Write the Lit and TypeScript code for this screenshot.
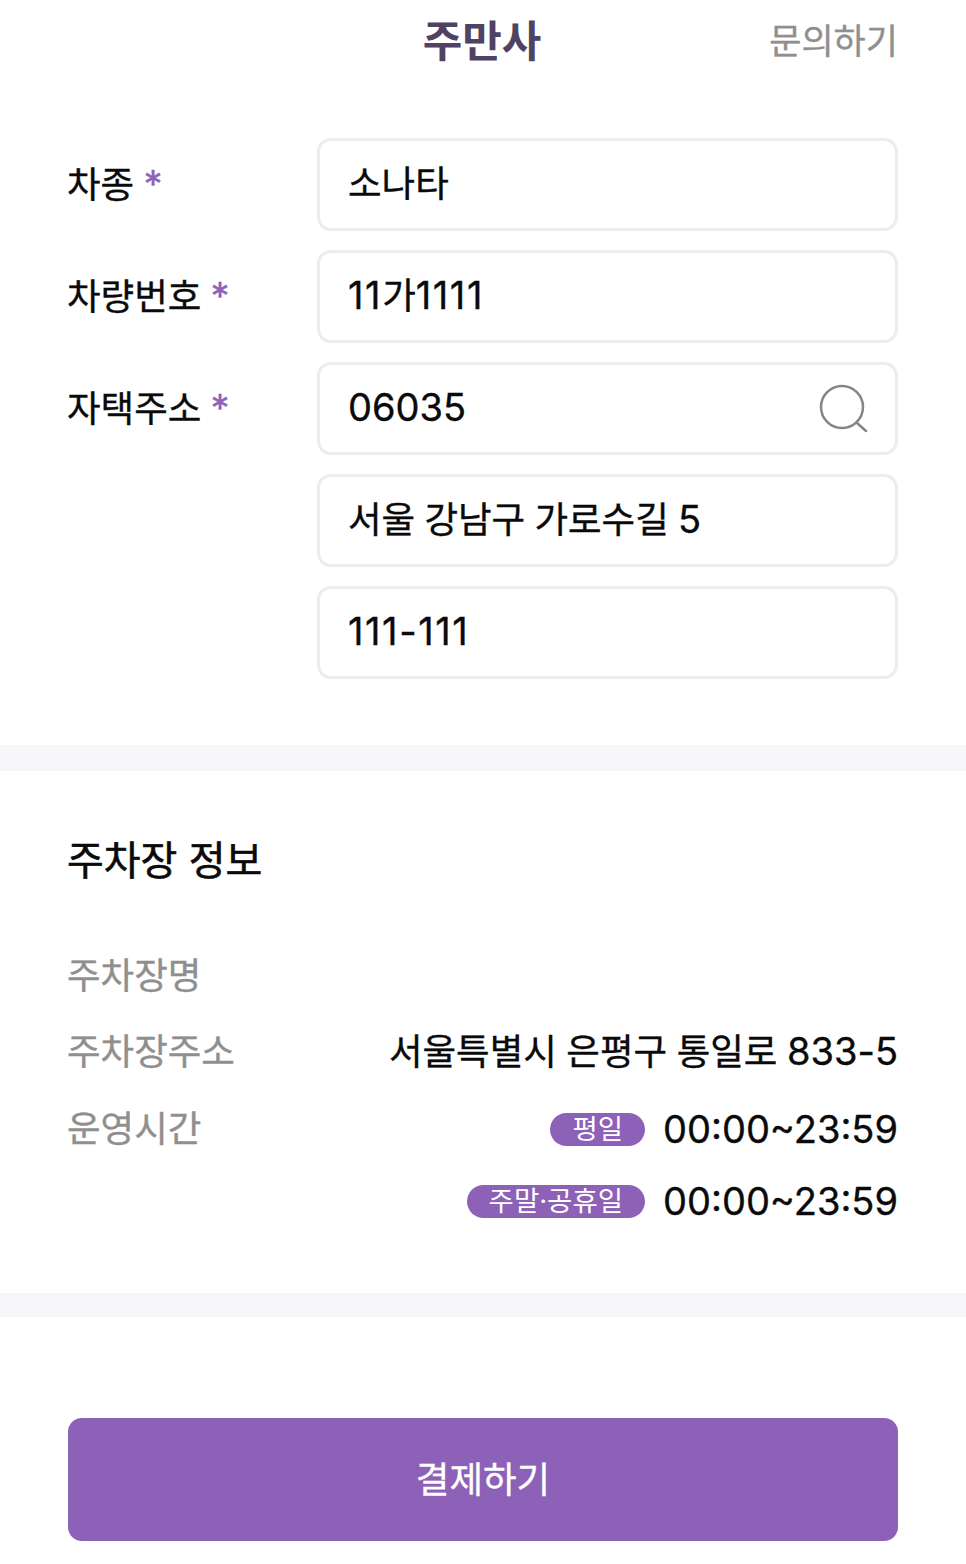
import { LitElement, html, css } from "lit";
import { customElement } from "lit/decorators.js";

@customElement("app-root")
export class AppRoot extends LitElement {
  static styles = css`
    :host {
      display: block;
      width: 966px;
      height: 1564px;
      overflow: hidden;
      background: #fff;
      color: #0a0a0a;
      font-family: Inter, "Noto Sans CJK KR", sans-serif;
      font-size: 36.5px;
      -webkit-text-stroke: 0.35px currentColor;
    }
    .header {
      height: 138px;
      box-sizing: border-box;
      padding: 0 68px 57px;
      display: grid;
      grid-template-columns: 1fr auto 1fr;
      align-items: center;
    }
    .title {
      grid-column: 2;
      font-size: 43px;
      font-weight: 700;
      color: #4f4263;
      line-height: 80px;
      margin-left: -2px;
      -webkit-text-stroke: 0;
    }
    .ask {
      justify-self: end;
      font-size: 35px;
      color: #8f8f8f;
      line-height: 80px;
    }
    .form {
      padding: 0 68px 66px;
      display: grid;
      grid-template-columns: 249px 581px;
      row-gap: 19px;
    }
    .label {
      line-height: 92px;
      height: 93px;
      white-space: nowrap;
      margin-left: -1px;
    }
    .star {
      color: #8d61b8;
      margin-left: -1px;
      font-size: 38px;
    }
    .field {
      grid-column: 2;
      height: 93px;
      box-sizing: border-box;
      border: 3px solid #ececec;
      border-radius: 14px;
      padding: 0 28px 7px;
      display: flex;
      align-items: center;
      justify-content: space-between;
      word-spacing: -1px;
    }
    .num {
      font-size: 38px;
    }
    .solo {
      margin-top: 4px;
    }
    .ones {
      letter-spacing: 1.6px;
    }
    .field svg {
      width: 52px;
      height: 52px;
      margin: 7px -3px 0 0;
    }
    .divider {
      height: 26px;
      background: #f7f7f9;
    }
    .divider.thin {
      height: 24px;
    }
    .info {
      height: 522px;
      box-sizing: border-box;
      padding: 62px 68px 0;
    }
    .info h2 {
      margin: 0 0 46px -1px;
      font-size: 40px;
      font-weight: 400;
      line-height: 56px;
      -webkit-text-stroke: 0.6px currentColor;
    }
    .row {
      display: flex;
      justify-content: space-between;
      align-items: center;
      height: 76px;
    }
    .row.top {
      align-items: flex-start;
    }
    .key {
      color: #8f8f8f;
      margin-left: -1px;
    }
    .row.top .key {
      line-height: 84px;
    }
    .addr {
      word-spacing: -0.7px;
    }
    .val {
      display: flex;
      align-items: center;
      gap: 18px;
    }
    .hours {
      display: flex;
      flex-direction: column;
      align-items: flex-end;
      gap: 20px;
      padding-top: 16px;
    }
    .pill {
      background: #8d61b8;
      color: #fff;
      font-size: 27.5px;
      line-height: 33px;
      border-radius: 17px;
      padding: 0 22px;
      -webkit-text-stroke: 0;
    }
    .time {
      font-size: 38px;
      line-height: 52px;
    }
    .footer {
      padding: 101px 68px 0;
    }
    .pay {
      height: 123px;
      box-sizing: border-box;
      padding-bottom: 4px;
      border-radius: 14px;
      background: #8d61b8;
      color: #fff;
      display: flex;
      align-items: center;
      justify-content: center;
    }
  `;

  render() {
    return html`
      <div class="header">
        <div class="title">주만사</div>
        <div class="ask">문의하기</div>
      </div>
      <div class="form">
        <div class="label">차종 <span class="star">*</span></div>
        <div class="field">소나타</div>
        <div class="label">차량번호 <span class="star">*</span></div>
        <div class="field"><span><span class="num ones">11</span>가<span class="num ones">1111</span></span></div>
        <div class="label">자택주소 <span class="star">*</span></div>
        <div class="field">
          <span class="num solo">06035</span>
          <svg viewBox="0 0 52 52" fill="none" stroke="#858585" stroke-width="2.5" stroke-linecap="round">
            <circle cx="24" cy="24" r="21" />
            <path d="M39 40 L48 48" />
          </svg>
        </div>
        <div class="field"><span>서울 강남구 가로수길 <span class="num">5</span></span></div>
        <div class="field"><span class="num ones solo">111-111</span></div>
      </div>
      <div class="divider"></div>
      <div class="info">
        <h2>주차장 정보</h2>
        <div class="row"><span class="key">주차장명</span></div>
        <div class="row">
          <span class="key">주차장주소</span>
          <span class="addr">서울특별시 은평구 통일로 <span class="num">833-5</span></span>
        </div>
        <div class="row top">
          <span class="key">운영시간</span>
          <div class="hours">
            <div class="val"><span class="pill">평일</span><span class="time">00:00~23:59</span></div>
            <div class="val"><span class="pill">주말·공휴일</span><span class="time">00:00~23:59</span></div>
          </div>
        </div>
      </div>
      <div class="divider thin"></div>
      <div class="footer"><div class="pay">결제하기</div></div>
    `;
  }
}
